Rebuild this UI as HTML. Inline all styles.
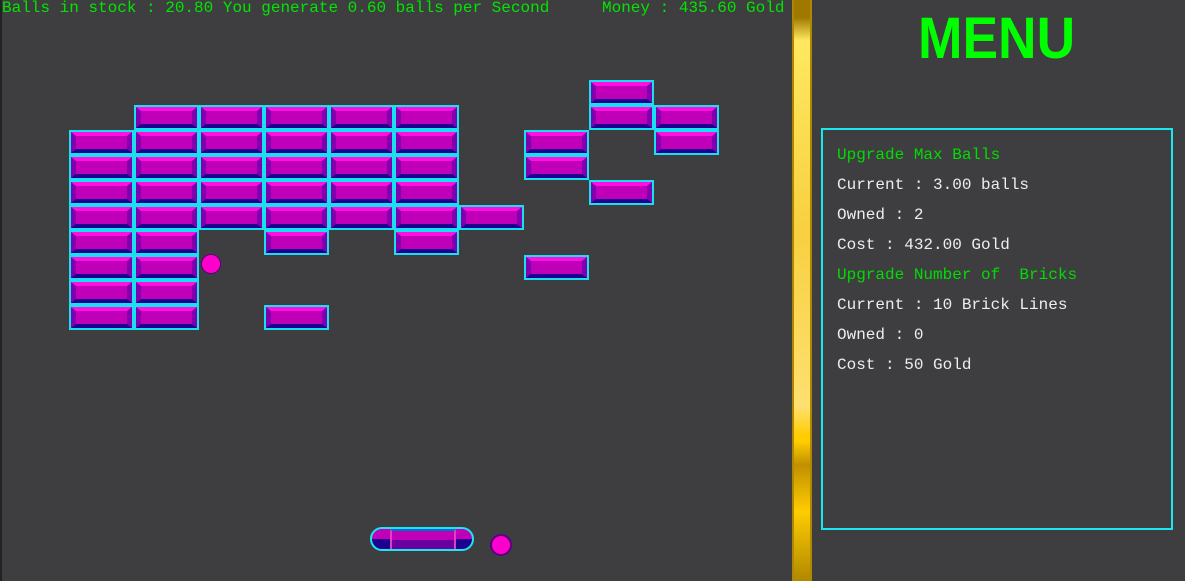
<!DOCTYPE html>
<html><head><style>
body{margin:0;width:1185px;height:581px;background:#3e3e40;position:relative;overflow:hidden;font-family:"Liberation Mono",monospace}
.t{position:absolute;color:#00e600;font-size:16px;top:-1px;white-space:pre}
.b{position:absolute;width:65px;height:25px;box-sizing:border-box;border:2px solid #18e0f0;margin:-1px 0 0 -1px}
.b i{display:block;width:100%;height:100%;box-sizing:border-box;border-top:4px solid #ff10e0;border-bottom:4px solid #1c0090;border-left:5px solid #8000b0;border-right:5px solid #8000b0;background:#c000b8}
.p{position:absolute;color:#eee;font-size:16px;left:837px;white-space:pre}
.g{color:#00dd00}
</style></head><body>
<div style="position:absolute;left:0;top:0;width:2px;height:581px;background:#222"></div>
<div class="t" style="left:2px">Balls in stock : 20.80 You generate 0.60 balls per Second</div>
<div class="t" style="left:602px">Money : 435.60 Gold</div>
<div id="g"></div>
<div style="position:absolute;left:792px;top:0;width:20px;height:581px;background:linear-gradient(#a07800 0,#a07800 3%,#ffe860 7%,#f8d040 40%,#ffe070 70%,#ffcc00 75%,#ffcc00 76%,#c09000 80%,#ffcc00 88%,#b08800 100%);box-shadow:inset 2px 0 #b08800,inset -2px 0 #b08800"></div>
<div style="position:absolute;left:918px;top:5px;font:bold 58px 'Liberation Sans',sans-serif;color:#00ff00;transform:scaleX(0.92);transform-origin:0 0">MENU</div>
<div style="position:absolute;left:821px;top:128px;width:348px;height:398px;border:2px solid #18e8f0"></div>
<div class="p g" style="top:146px">Upgrade Max Balls</div>
<div class="p" style="top:176px">Current : 3.00 balls</div>
<div class="p" style="top:206px">Owned : 2</div>
<div class="p" style="top:236px">Cost : 432.00 Gold</div>
<div class="p g" style="top:266px">Upgrade Number of  Bricks</div>
<div class="p" style="top:296px">Current : 10 Brick Lines</div>
<div class="p" style="top:326px">Owned : 0</div>
<div class="p" style="top:356px">Cost : 50 Gold</div>
<div style="position:absolute;left:201px;top:254px;width:20px;height:20px;border-radius:50%;background:#ff00cc;border:1.5px solid #5a0080;box-sizing:border-box"></div>
<div style="position:absolute;left:490px;top:534px;width:22px;height:22px;border-radius:50%;background:#ff00cc;border:2px solid #5a0080;box-sizing:border-box"></div>
<div style="position:absolute;left:370px;top:527px;width:104px;height:24px;box-sizing:border-box;border:2px solid #18e8f0;border-radius:12px;background:linear-gradient(#c000b8 50%,#200090 50%);overflow:hidden">
<div style="position:absolute;left:18px;top:0;width:66px;height:22px;background:linear-gradient(#c000b8 45%,#6a00a0 45%);border-left:2px solid #e040c0;border-right:2px solid #e040c0;border-top:2px solid #0070d0;box-sizing:border-box"></div></div>
<script>
var rows={80:[8],105:[1,2,3,4,5,8,9],130:[0,1,2,3,4,5,7,9],155:[0,1,2,3,4,5,7],180:[0,1,2,3,4,5,8],205:[0,1,2,3,4,5,6],230:[0,1,3,5],255:[0,1,7],280:[0,1],305:[0,1,3]};
var h='';for(var y in rows)rows[y].forEach(function(c){h+='<div class="b" style="left:'+(70+c*65)+'px;top:'+(+y+1)+'px"><i></i></div>'});
document.getElementById('g').innerHTML=h;
</script>
</body></html>
